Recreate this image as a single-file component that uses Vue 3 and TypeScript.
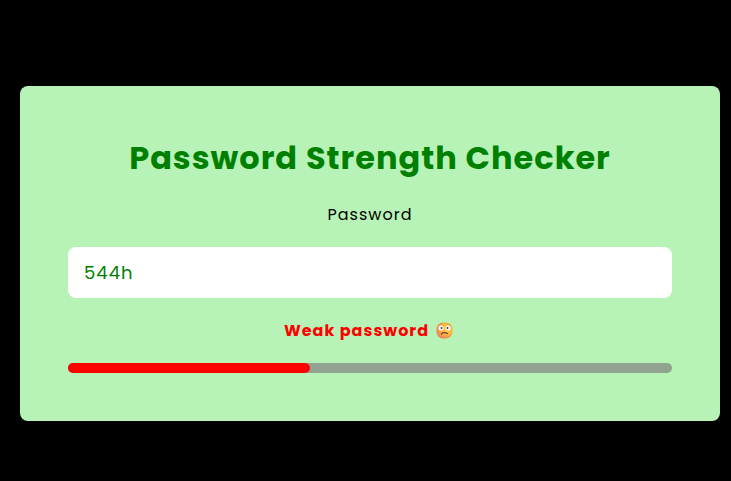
<script setup lang="ts">
import { computed, ref } from 'vue'

interface Strength {
  text: string
  level: string
}

const password = ref<string>('544h')

const percent = computed<number>(() => Math.min(password.value.length * 10, 100))

const strength = computed<Strength>(() => {
  if (percent.value <= 40) return { text: 'Weak password', level: 'weak' }
  if (percent.value <= 70) return { text: 'Medium password', level: 'medium' }
  return { text: 'Strong password', level: 'strong' }
})
</script>

<template>
  <main class="page">
    <section class="card">
      <h1 class="title">Password Strength Checker</h1>
      <label class="label" for="password">Password</label>
      <input id="password" v-model="password" class="field" type="text" autocomplete="off" spellcheck="false" />
      <p class="message" :class="strength.level">
        <span>{{ strength.text }}</span>
        <svg class="face" viewBox="0 0 34 34" aria-hidden="true">
          <defs>
            <radialGradient id="skin" cx="0.65" cy="0.4" r="0.72">
              <stop offset="0" stop-color="#ffcf45" />
              <stop offset="0.5" stop-color="#fbb640" />
              <stop offset="1" stop-color="#ec7560" />
            </radialGradient>
          </defs>
          <rect x="1" y="1" width="32" height="32" rx="13" fill="url(#skin)" />
          <path d="M5 7q3-4 7-4M22 3q4 0 7 4" fill="none" stroke="#c98a3f" stroke-width="1.5" stroke-linecap="round" />
          <circle cx="10" cy="12" r="5" fill="#fff" />
          <circle cx="24" cy="12" r="5" fill="#fff" />
          <circle cx="11" cy="12" r="2" fill="#42364a" />
          <circle cx="23" cy="12" r="2" fill="#42364a" />
          <path d="M11 24q1-3 5-3t7 2" fill="none" stroke="#6b3d38" stroke-width="2.5" stroke-linecap="round" />
        </svg>
      </p>
      <div class="track" role="progressbar" aria-label="Password strength" aria-valuemin="0" aria-valuemax="100" :aria-valuenow="percent">
        <div class="fill" :class="strength.level" :style="{ width: percent + '%' }"></div>
      </div>
    </section>
  </main>
</template>

<style>
body {
  margin: 0;
  background: #000;
}
</style>

<style scoped>
.page {
  box-sizing: border-box;
  min-height: 100vh;
  padding: 86px 11px 60px 20px;
  font-family: Poppins, Inter, sans-serif;
  letter-spacing: 1px;
}

.card {
  box-sizing: border-box;
  max-width: 700px;
  margin: 0 auto;
  padding: 48px;
  border-radius: 8px;
  background: #b7f3b7;
  text-align: center;
}

.title {
  margin: 0 0 20px;
  color: #008000;
  font-size: 32px;
  font-weight: 700;
  line-height: 48px;
}

.label {
  display: block;
  margin-bottom: 20px;
  color: #000;
  font-size: 16px;
  line-height: 25px;
}

.field {
  display: block;
  box-sizing: border-box;
  width: 100%;
  padding: 12px 16px;
  border: 0;
  border-radius: 8px;
  outline: 0;
  background: #fff;
  color: #008000;
  font-family: inherit;
  font-size: 18px;
  line-height: 27px;
  letter-spacing: inherit;
}

.message {
  display: flex;
  justify-content: center;
  align-items: center;
  gap: 7px;
  margin: 20px 0;
  padding-right: 3px;
  font-size: 16px;
  font-weight: 700;
  line-height: 25px;
}

.face {
  width: 17px;
  height: 17px;
}

.track {
  height: 10px;
  border-radius: 5px;
  background: #90a290;
}

.fill {
  height: 100%;
  border-radius: 5px;
}

.message.weak {
  color: #f00;
}

.fill.weak {
  background: #f00;
}

.message.medium {
  color: #b35900;
}

.fill.medium {
  background: #ffa500;
}

.message.strong {
  color: #008000;
}

.fill.strong {
  background: #008000;
}
</style>
